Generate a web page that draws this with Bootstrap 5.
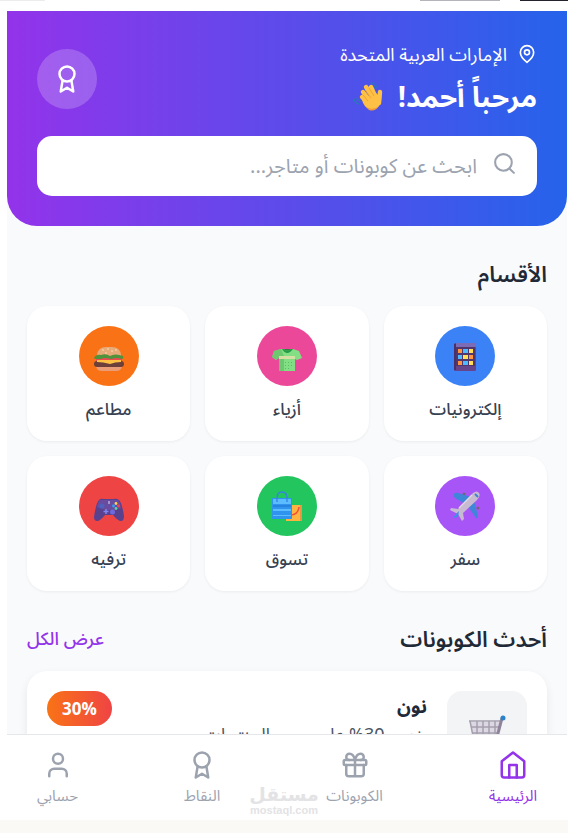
<!DOCTYPE html>
<html lang="ar" dir="rtl">
<head>
<meta charset="utf-8">
<meta name="viewport" content="width=device-width, initial-scale=1">
<title>الكوبونات</title>
<link href="https://cdn.jsdelivr.net/npm/bootstrap@5.3.0/dist/css/bootstrap.min.css" rel="stylesheet">
<style>
  body { font-family: "Noto Sans", "Noto Sans Arabic", "Open Sans", sans-serif; background: #faf9f5; color: #1f2937; }
  .page-edge { height: 11px; flex: none; }
  .edge-tab { height: 1px; }
  .edge-a { width: 48px; background: #23222d; }
  .edge-b { width: 80px; margin-right: 20px; background: #b5b4ba; }
  .edge-c { width: 45px; margin-right: auto; background: #ececec; }
  .frame { padding: 0 1px 0 7px; min-height: 0; margin-bottom: 13px; }
  .app { background: #f9fafb; min-height: 0; }
  .hero { background: linear-gradient(to left, #2563eb, #9333ea); border-radius: 0 0 30px 30px; padding: 30px; flex: none; }
  .hero-top { height: 75px; margin-bottom: 20px; }
  .place { font-size: 18px; line-height: 26px; gap: 10px; margin-bottom: 8px; }
  .hello { font-size: 28px; line-height: 42px; gap: 15px; }
  .medal { width: 60px; height: 60px; background: rgba(255,255,255,.2); }
  .search-box { height: 60px; border-radius: 15px; padding: 0 20px; gap: 15px; }
  .search-box svg { margin-top: 15px; color: #9ca3af; }
  .search-box input { font-size: 20px; outline: 0; min-width: 0; }
  .search-box input::placeholder { color: #9ca3af; opacity: 1; }
  .scroller { padding: 30px 20px; min-height: 0; scrollbar-width: none; }
  .scroller::-webkit-scrollbar { display: none; }
  .head-row { height: 35px; margin-bottom: 15px; }
  .head-row h2 { font-size: 22px; line-height: 35px; font-weight: 600; }
  .head-row a { font-size: 18px; font-weight: 500; color: #9333ea; }
  .cats { display: grid; grid-template-columns: repeat(3, 1fr); gap: 15px; margin-bottom: 30px; }
  .cat { border-radius: 20px; padding: 20px 10px; gap: 11px; color: #374151; font-size: 17px; font-weight: 500; line-height: 24px; box-shadow: 0 1px 3px rgba(0,0,0,.06); }
  .disc { width: 60px; height: 60px; }
  .c-blue { background: #3b82f6; } .c-pink { background: #ec4899; } .c-orange { background: #f97316; }
  .c-violet { background: #a855f7; } .c-green { background: #22c55e; } .c-red { background: #ef4444; }
  .coupon { border-radius: 20px; padding: 20px; gap: 20px; box-shadow: 0 4px 10px rgba(0,0,0,.08); }
  .thumb { width: 80px; height: 80px; border-radius: 15px; background: #f3f4f6; flex: none; }
  .coupon h3 { font-size: 19px; line-height: 30px; }
  .coupon p { font-size: 18px; line-height: 26px; color: #4b5563; }
  .off { height: 35px; padding: 0 15px; font-family: "Open Sans", sans-serif; font-size: 17px; background: linear-gradient(to left, #ef4444, #f97316); }
  .tabs { border-top: 1px solid #e5e7eb; padding: 15px 30px; flex: none; }
  .tab { gap: 5px; font-size: 15px; line-height: 20px; color: #9ca3af; }
  .tab.on { color: #9333ea; }
  .stamp { left: 249px; bottom: 4px; width: 70px; color: #e3e3e5; font-family: "Liberation Sans", sans-serif; }
  .stamp b { font-family: "DejaVu Sans", sans-serif; font-size: 19px; line-height: 20px; }
  .stamp span { font-size: 11px; line-height: 12px; }
  .line { fill: none; stroke: currentColor; stroke-width: 2; stroke-linecap: round; stroke-linejoin: round; flex: none; }
</style>
</head>
<body class="vh-100 d-flex flex-column overflow-hidden">
<div class="page-edge bg-white d-flex"><div class="edge-tab edge-a"></div><div class="edge-tab edge-b"></div><div class="edge-tab edge-c"></div></div>
<div class="frame bg-white flex-grow-1 d-flex flex-column position-relative">
<div class="app flex-grow-1 d-flex flex-column">
  <header class="hero text-white">
    <div class="hero-top d-flex justify-content-between align-items-center">
      <div>
        <div class="place d-flex align-items-center">
          <svg class="line" width="20" height="20" viewBox="0 0 24 24"><path d="M20 10c0 6-8 12-8 12s-8-6-8-12a8 8 0 0 1 16 0Z"/><circle cx="12" cy="10" r="3"/></svg>
          <span>الإمارات العربية المتحدة</span>
        </div>
        <h1 class="hello fw-bold d-flex align-items-center m-0"><span>مرحباً أحمد!</span>
          <svg width="30" height="30" viewBox="0 0 30 30"><g fill="none" stroke="#2879b8" stroke-width="1.2" stroke-linecap="round"><path d="M18 2q4 0 6 4M19 5q2 0 3 2M1 18q1 4 5 5M4 17q0 2 3 3"/></g><g stroke="#ffc145" stroke-width="4.4" stroke-linecap="round" fill="none"><path d="M10 11l7 9M13 6l7 11M18 6l5 11M9 16l6 6M27 11l-1 11"/></g><path d="M9 19l13-8 3 3 3-2q1 9-2 13-4 5-10 3-5-2-7-9" fill="#ffc145"/><path d="M12 9l6 8M16 7l5 8M10 14l5 6" stroke="#e99b32" stroke-width=".8" fill="none"/><path d="M13 26q7 4 13-1-4 6-10 4Z" fill="#ee9a3a"/></svg>
        </h1>
      </div>
      <div class="medal rounded-circle d-flex align-items-center justify-content-center">
        <svg class="line" width="30" height="30" viewBox="0 0 24 24"><circle cx="12" cy="8" r="6"/><path d="M15.477 12.89 17 22l-5-3-5 3 1.523-9.11"/></svg>
      </div>
    </div>
    <label class="search-box bg-white d-flex" for="q">
      <svg class="line" width="25" height="25" viewBox="0 0 24 24"><circle cx="11" cy="11" r="8"/><path d="m21 21-4.300-4.300"/></svg>
      <input id="q" type="text" class="border-0 p-0 bg-transparent flex-grow-1" aria-label="بحث" placeholder="ابحث عن كوبونات أو متاجر...">
    </label>
  </header>

  <main class="scroller flex-grow-1 overflow-auto">
    <div class="head-row"><h2 class="m-0">الأقسام</h2></div>
    <div class="cats">
      <a href="#" class="cat bg-white d-flex flex-column align-items-center text-decoration-none">
        <span class="disc c-blue rounded-circle d-flex align-items-center justify-content-center"><svg width="30" height="30" viewBox="0 0 30 30"><rect x="4" y="2" width="22" height="28" rx="1.500" fill="#65448b"/><path d="M4 3h2v26H4Z" fill="#493068"/><path d="M6 2h19q1 0 1 1v3H6Z" fill="#7b6cb5"/><path d="M6 6h19v19H6Z" fill="#50366d"/><g fill="#ff963f"><path d="M8 8h4v4H8zM19 14h4v4h-4zM8 20h4v4H8z"/></g><g fill="#4db9ff"><path d="M13 8h5v4h-5zM8 14h4v4H8zM13 20h5v4h-5z"/></g><g fill="#ffdf58"><path d="M19 8h4v4h-4zM13 14h5v4h-5zM19 20h4v4h-4z"/></g></svg></span>
        <span>إلكترونيات</span></a>
      <a href="#" class="cat bg-white d-flex flex-column align-items-center text-decoration-none">
        <span class="disc c-pink rounded-circle d-flex align-items-center justify-content-center"><svg width="30" height="30" viewBox="0 0 30 30"><path d="M9 8h12l6 2 3 7-5 2-2-1v12H7V17l-3 2-4-3 2-6Z" fill="#83df83"/><path d="M9 8L2 10l-2 6 4 3 3-2v13h5V15Z" fill="#60bd65" opacity=".65"/><path d="M10 8q5 8 11 0l-2 0q-4 3-7 0Z" fill="#229d48"/><path d="M12 8q3 3 7 0Z" fill="#3e7441"/><path d="M7 15h16v3H7Z" fill="#d7e0a4"/><g fill="#57bd67"><path d="M13 21h1v1h-1zM16 21h1v1h-1zM19 21h1v1h-1zM13 24h1v1h-1zM16 24h1v1h-1zM19 24h1v1h-1zM13 27h1v1h-1zM16 27h1v1h-1z"/></g></svg></span>
        <span>أزياء</span></a>
      <a href="#" class="cat bg-white d-flex flex-column align-items-center text-decoration-none">
        <span class="disc c-orange rounded-circle d-flex align-items-center justify-content-center"><svg width="30" height="30" viewBox="0 0 30 30"><path d="M2 24h26q0 6-6 6H8q-6 0-6-6Z" fill="#e99c75"/><rect y="20" width="30" height="6" rx="3" fill="#6d3f3b"/><path d="M3 14Q4 6 12 6h6q8 0 9 8v2H3Z" fill="#e7aa78"/><path d="M2 17h26v3H2Z" fill="#e94d51"/><path d="M0 17q2-4 7-3 5-2 9 1 5-3 13 0 1 3-1 3-5-2-11 0-7-2-10 0H1Z" fill="#51923d"/><path d="M3 19h24v2q-6 0-11 2-7-2-13-2Z" fill="#ffc044"/><g fill="#ffe4b7"><circle cx="9" cy="9" r=".8"/><circle cx="14" cy="8" r=".8"/><circle cx="18" cy="10" r=".8"/><circle cx="22" cy="9" r=".8"/><circle cx="12" cy="12" r=".8"/></g></svg></span>
        <span>مطاعم</span></a>
      <a href="#" class="cat bg-white d-flex flex-column align-items-center text-decoration-none">
        <span class="disc c-violet rounded-circle d-flex align-items-center justify-content-center"><svg width="30" height="30" viewBox="0 0 30 30"><circle cx="14" cy="3" r="1.500" fill="#6c6774"/><circle cx="28" cy="17" r="1.500" fill="#6c6774"/><path d="M4 3q1-2 4-1l13 4 3 4 4 15q0 3-2 2l-9-13L5 7Q3 5 4 3Z" fill="#3e86d8"/><path d="M23 2q4-3 6 0 2 3-2 7L13 22l1 6-2 2-4-7-8-4 1-2 7 1Z" fill="#c8bad0"/><path d="M3 27l3-4 3-3-1 6Z" fill="#3b91e5"/><path d="M25 3l3 3" stroke="#3b82d0" stroke-width="2"/><path d="M22 4L9 17" stroke="#dfd8e6" stroke-width="1.500"/></svg></span>
        <span>سفر</span></a>
      <a href="#" class="cat bg-white d-flex flex-column align-items-center text-decoration-none">
        <span class="disc c-green rounded-circle d-flex align-items-center justify-content-center"><svg width="30" height="30" viewBox="0 0 30 30"><path d="M14 14h16v16H14Z" fill="#ffb340"/><path d="M28 14h2v16h-2z" fill="#e89644"/><path d="M16 24q10 1 11-8" fill="none" stroke="#f04e36" stroke-width="1.500"/><path d="M0 7h20v21H0Z" fill="#2f94ee"/><path d="M1 8h18v5H1zM1 18h18v2H1zM1 24h18v1H1z" fill="#5bbcff"/><path d="M1 15h18" stroke="#2173cf"/><path d="M5 11V7q0-6 5-6t5 6v4" fill="none" stroke="#3683df" stroke-width="1.300"/></svg></span>
        <span>تسوق</span></a>
      <a href="#" class="cat bg-white d-flex flex-column align-items-center text-decoration-none">
        <span class="disc c-red rounded-circle d-flex align-items-center justify-content-center"><svg width="30" height="30" viewBox="0 0 30 30"><path d="M5 9q2-2 5-1h9q4-1 6 1 3 3 5 16 0 5-3 5-3 0-8-6h-8q-5 6-8 6-3 0-3-4Q2 12 5 9Z" fill="#59418e"/><path d="M6 9h18q2 2 3 8-12 5-24-1 1-5 3-7Z" fill="#694c9f"/><circle cx="8" cy="15" r="2.500" fill="#4e61bd"/><circle cx="18.500" cy="21" r="2.500" fill="#6e69df"/><path d="M12 18v5M9.500 20.500h5" stroke="#8185f1" stroke-width="1.500"/><circle cx="22" cy="12.500" r="1.400" fill="#ffd34d"/><circle cx="19.500" cy="15" r="1.400" fill="#31a5f4"/><circle cx="24.500" cy="15" r="1.400" fill="#ed4453"/><circle cx="22" cy="17.500" r="1.400" fill="#56d3a3"/><path d="M14 10h2v3h-2z" fill="#a394cb"/></svg></span>
        <span>ترفيه</span></a>
    </div>

    <div class="head-row d-flex justify-content-between align-items-center">
      <h2 class="m-0">أحدث الكوبونات</h2>
      <a href="#" class="text-decoration-none">عرض الكل</a>
    </div>
    <article class="coupon bg-white d-flex align-items-start">
      <div class="thumb d-flex align-items-center justify-content-center"><svg width="40" height="40" viewBox="0 0 40 40"><path d="M3 11h30l-5 19H8Z" fill="#dcd8e3"/><path d="M2 10h32M3 10l4 20h21M4 16h28M5 22h25M10 10v19M16 10v19M22 10v19M28 10v18" fill="none" stroke="#a59eae" stroke-width="1.500"/><path d="M35 7l-6 23" stroke="#8f849b" stroke-width="3"/><circle cx="36" cy="7" r="2.500" fill="#2b82c9"/><circle cx="11" cy="36" r="3" fill="#55505c"/><circle cx="27" cy="36" r="3" fill="#55505c"/></svg></div>
      <div class="flex-grow-1"><h3 class="fw-bold m-0">نون</h3><p class="m-0">خصم 30% على جميع المنتجات</p></div>
      <span class="off rounded-pill text-white fw-bold d-flex align-items-center" dir="ltr">30%</span>
    </article>
  </main>

  <nav class="tabs bg-white d-flex justify-content-between">
    <a href="#" class="tab on d-flex flex-column align-items-center text-decoration-none"><svg class="line" width="30" height="30" viewBox="0 0 24 24"><path d="m3 9 9-7 9 7v11a2 2 0 0 1-2 2H5a2 2 0 0 1-2-2z"/><path d="M9 22V12h6v10"/></svg><span>الرئيسية</span></a>
    <a href="#" class="tab d-flex flex-column align-items-center text-decoration-none"><svg class="line" width="30" height="30" viewBox="0 0 24 24"><rect x="3" y="8" width="18" height="4" rx="1"/><path d="M12 8v13M19 12v7a2 2 0 0 1-2 2H7a2 2 0 0 1-2-2v-7M7.500 8a2.500 2.500 0 0 1 0-5A4.800 8 0 0 1 12 8a4.800 8 0 0 1 4.500-5 2.500 2.500 0 0 1 0 5"/></svg><span>الكوبونات</span></a>
    <a href="#" class="tab d-flex flex-column align-items-center text-decoration-none"><svg class="line" width="30" height="30" viewBox="0 0 24 24"><circle cx="12" cy="8" r="6"/><path d="M15.477 12.89 17 22l-5-3-5 3 1.523-9.11"/></svg><span>النقاط</span></a>
    <a href="#" class="tab d-flex flex-column align-items-center text-decoration-none"><svg class="line" width="30" height="30" viewBox="0 0 24 24"><path d="M19 21v-2a4 4 0 0 0-4-4H9a4 4 0 0 0-4 4v2"/><circle cx="12" cy="7" r="4"/></svg><span>حسابي</span></a>
  </nav>
</div>
<div class="stamp position-absolute d-flex flex-column align-items-center pe-none"><b>مستقل</b><span class="fw-bold">mostaql.com</span></div>
</div>
<script src="https://cdn.jsdelivr.net/npm/bootstrap@5.3.0/dist/js/bootstrap.bundle.min.js"></script>
</body>
</html>
